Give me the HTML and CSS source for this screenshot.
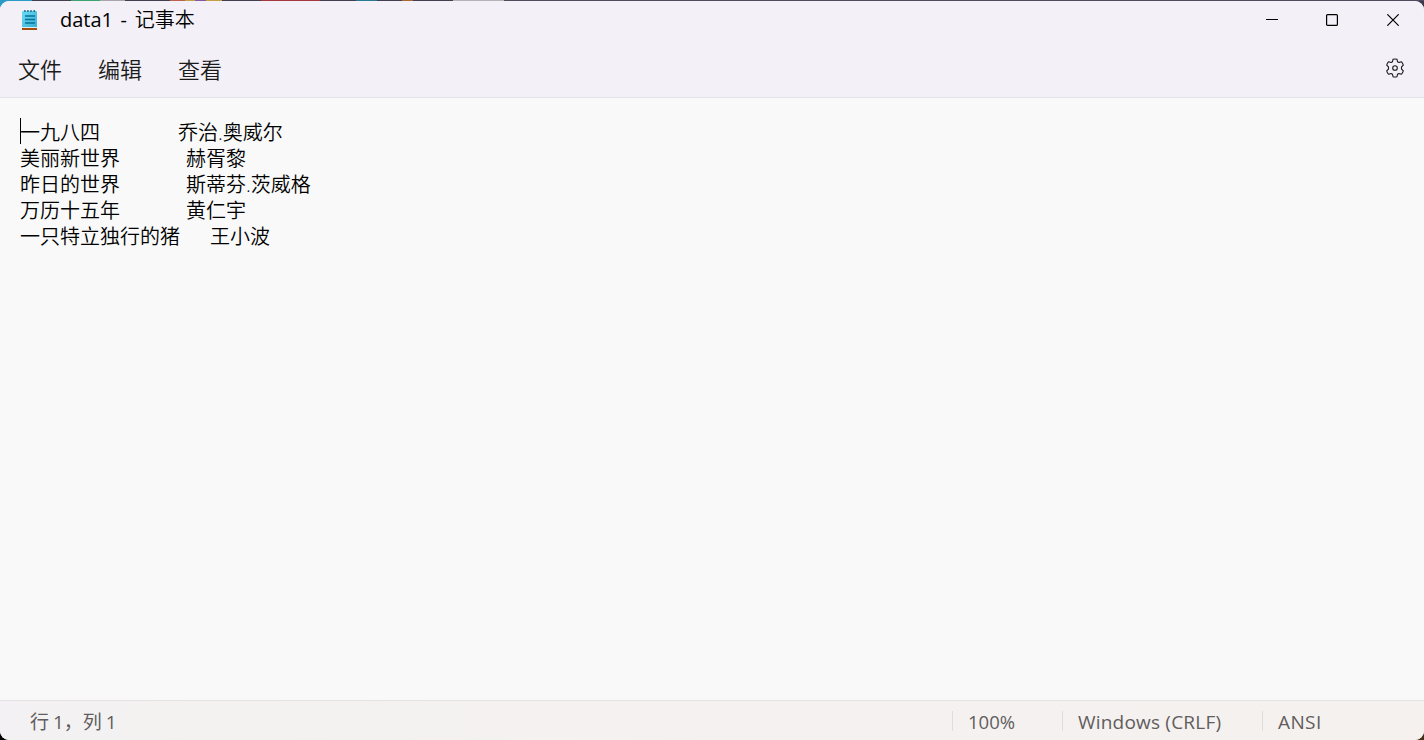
FILE: index.html
```html
<!DOCTYPE html>
<html lang="zh-CN">
<head>
    <meta charset="UTF-8">
    <meta name="viewport" content="width=device-width, initial-scale=1.0">
    <title>data1 - 记事本</title>
    <link rel="stylesheet" href="styles.css">
</head>
<body>
    <div class="window">
        <!-- Title bar -->
        <header class="titlebar">
            <svg class="app-icon" width="16" height="21" viewBox="0 0 16 21">
                <defs>
                    <linearGradient id="page" x1="0" y1="0" x2="1" y2="1">
                        <stop offset="0" stop-color="#6bdcf3"/>
                        <stop offset="1" stop-color="#38add5"/>
                    </linearGradient>
                </defs>
                <rect x="0" y="18" width="15" height="2" fill="#a34d0c"/>
                <rect x="0" y="1" width="15" height="17" rx="1" fill="url(#page)"/>
                <path d="M0 17.5H15" stroke="#d9f2f7" stroke-width="1"/>
                <path d="M2.9 0v2M5.9 0v2M9 0v2M12.2 0v2" stroke="#12607c" stroke-width="1.3"/>
                <path d="M3 6H13M3 9.5H13M3 13H13" stroke="#07739a" stroke-width="1.7"/>
            </svg>
            <h1 class="title">data1 - <span class="title-cn">记事本</span></h1>
            <div class="controls">
                <svg width="12" height="12" viewBox="0 0 12 12"><path d="M0 5.5H12"/></svg>
                <svg width="12" height="12" viewBox="0 0 12 12"><rect x=".6" y=".6" width="10.8" height="10.8" rx="1"/></svg>
                <svg width="12" height="12" viewBox="0 0 12 12"><path d="M.3 .3L11.7 11.7M11.7 .3L.3 11.7"/></svg>
            </div>
        </header>

        <!-- Menu -->
        <nav class="menubar">
            <span class="menu-item">文件</span>
            <span class="menu-item">编辑</span>
            <span class="menu-item">查看</span>
            <svg class="settings" width="20" height="20" viewBox="0 0 20 20">
                <path d="M8 1.3Q10 .7 12 1.3L12.5 3.7L13.9 4.5L16.3 3.7Q17.8 5.2 18.3 7.2L16.5 9V11L18.3 12.8Q17.8 14.8 16.3 16.3L13.9 15.5L12.5 16.3L12 18.7Q10 19.3 8 18.7L7.5 16.3L6.1 15.5L3.7 16.3Q2.2 14.8 1.7 12.8L3.5 11V9L1.7 7.2Q2.2 5.2 3.7 3.7L6.1 4.5L7.5 3.7Z"/>
                <circle cx="10" cy="10" r="2.3"/>
            </svg>
        </nav>

        <!-- Document -->
        <main class="editor">一九八四             乔治.奥威尔
美丽新世界           赫胥黎
昨日的世界           斯蒂芬.茨威格
万历十五年           黄仁宇
一只特立独行的猪     王小波</main>

        <!-- Status bar -->
        <footer class="statusbar">
            <span class="position">行 1，列 1</span>
            <span class="status zoom">100%</span>
            <span class="status line-ending">Windows (CRLF)</span>
            <span class="status encoding">ANSI</span>
        </footer>
    </div>
</body>
</html>
```
FILE: styles.css
```css
* {
    box-sizing: border-box;
}
body {
    margin: 0;
    padding-top: 1px;
    height: 740px;
    overflow: hidden;
    font-family: "Open Sans", "Noto Sans CJK SC", sans-serif;
    /* strip of desktop behind the window */
    background:
        linear-gradient(90deg, #2b9cc6 0 32px, #443f50 32px 71px, #3aa370 71px 100px, #aaa5ac 100px 125px, #443f50 125px 170px, #bd604c 170px 185px, #c1a144 185px 195px, #8257a4 195px 206px, #c1a144 206px 222px, #443f50 222px 261px, #a3393d 261px 320px, #443f50 320px 356px, #287994 356px 377px, #443f50 377px 402px, #a86a31 402px 413px, #443f50 413px 453px, #b6b3b8 453px 504px, #514a5d 504px) 0 0 / 100% 1px no-repeat,
        linear-gradient(#2b9cc6, #2b9cc6) 0 0 / 20px 20px no-repeat,
        linear-gradient(#3d384b, #3d384b) 100% 0 / 20px 20px no-repeat,
        linear-gradient(#4a321a, #4a321a) 100% 100% / 20px 20px no-repeat,
        #000;
}
.window {
    display: flex;
    flex-direction: column;
    height: 739px;
    border-radius: 9px;
    overflow: hidden;
    background: #f9f9f9;
}
.titlebar {
    display: flex;
    align-items: center;
    height: 38px;
    padding: 0 25px 0 22px;
    background: #f3f0f7;
}
.app-icon {
    margin-top: 1px;
}
.title {
    margin: 0 0 0 22px;
    font-size: 20px;
    font-weight: 400;
    line-height: 38px;
    word-spacing: 2.4px;
    color: #000;
}
.title-cn {
    font-weight: 350;
}
.controls {
    display: flex;
    gap: 48px;
    margin-left: auto;
}
.controls svg {
    fill: none;
    stroke: #000;
    stroke-width: 1.2;
}
.controls svg:last-child {
    margin-left: 1px;
}
.menubar {
    display: flex;
    align-items: center;
    gap: 36px;
    height: 59px;
    padding: 0 19px 0 18px;
    background: #f3f0f7;
    border-bottom: 1px solid #e5e3e8;
}
.menu-item {
    padding-top: 2px;
    font-size: 22px;
    font-weight: 350;
    line-height: 30px;
    color: #1b1b1b;
}
.settings {
    margin-left: auto;
    fill: none;
    stroke: #1b1b1b;
    stroke-width: 1.1;
    stroke-linejoin: round;
}
.editor {
    flex: 1;
    position: relative;
    padding: 22px 20px;
    font-size: 20px;
    font-weight: 350;
    line-height: 26px;
    white-space: pre;
    word-spacing: 0.8px;
    color: #000;
}
/* text caret */
.editor::before {
    content: "";
    position: absolute;
    left: 20px;
    top: 20px;
    width: 1px;
    height: 26px;
    background: #000;
}
.statusbar {
    display: flex;
    align-items: center;
    height: 40px;
    padding: 2px 0 0 30px;
    border-top: 1px solid #e5e3e3;
    background: linear-gradient(90deg, #f3f1f3, #f3f2f0 15%, #f5f1f0 50%, #f5f1ef);
    font-size: 18.5px;
    line-height: 26px;
    color: #5f5d5d;
}
.position {
    flex: 1;
    font-size: 19px;
    word-spacing: -1px;
}
.status {
    display: flex;
    align-items: center;
}
.status::before {
    content: "";
    width: 1px;
    height: 20px;
    margin: -2px 15px 0 0;
    background: #dfdcdb;
}
.zoom {
    width: 110px;
}
.line-ending {
    width: 200px;
    font-size: 19px;
    letter-spacing: 0.2px;
}
.encoding {
    width: 162px;
    font-size: 19px;
    letter-spacing: 0.4px;
}
```
